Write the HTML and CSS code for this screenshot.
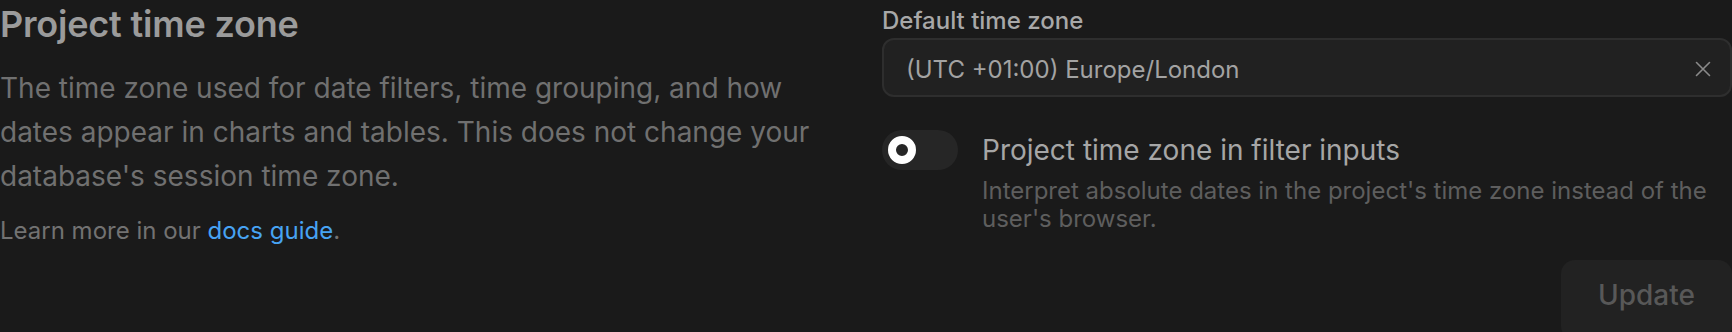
FILE: index.html
```html
<!DOCTYPE html>
<html lang="en">
<head>
<meta charset="utf-8">
<title>Project time zone</title>
<link rel="stylesheet" href="styles.css">
</head>
<body>
<div class="settings">
  <section class="intro">
    <h2 class="title">Project time zone</h2>
    <p class="desc">The time zone used for date filters, time grouping, and how dates appear in charts and tables. This does not change your database's session time zone.</p>
    <p class="learn">Learn more in our <a class="link" href="#">docs guide</a>.</p>
  </section>
  <section class="form">
    <label class="label">Default time zone</label>
    <div class="select">
      <span class="select-value">(UTC +01:00) Europe/London</span>
      <svg class="clear" width="16" height="16" viewBox="0 0 16 16" fill="none" stroke="currentColor" stroke-width="1.6" stroke-linecap="round"><path d="M1.5 1.5L14.5 14.5M14.5 1.5L1.5 14.5"/></svg>
    </div>
    <div class="option">
      <div class="toggle"><span class="knob"></span></div>
      <div class="option-text">
        <div class="option-title">Project time zone in filter inputs</div>
        <div class="option-desc">Interpret absolute dates in the project's time zone instead of the user's browser.</div>
      </div>
    </div>
    <div class="actions">
      <button class="btn">Update</button>
    </div>
  </section>
</div>
</body>
</html>
```

FILE: styles.css
```css
html, body {
  margin: 0;
  padding: 0;
  background: #1a1a1a;
  height: 100%;
  overflow: hidden;
}
body {
  font-family: Inter, "Noto Sans", sans-serif;
}
.settings {
  display: grid;
  grid-template-columns: 850px 1fr;
  column-gap: 32px;
  width: 1732px;
}
.intro {
  padding-top: 2px;
}
.title {
  margin: 0;
  font-size: 36px;
  font-weight: 600;
  line-height: 44px;
  color: #9b9b9b;
  letter-spacing: -0.2px;
}
.desc {
  margin: 20px 0 0;
  font-size: 28px;
  line-height: 44px;
  color: #707070;
  max-width: 830px;
}
.learn {
  margin: 17px 0 0;
  font-size: 24px;
  line-height: 32px;
  color: #727272;
}
.link {
  color: #47a3f3;
  text-decoration: none;
}
.form {
  display: flex;
  flex-direction: column;
}
.label {
  font-size: 24px;
  font-weight: 500;
  line-height: 32px;
  color: #a8a8a8;
  padding-top: 5px;
}
.select {
  margin-top: 1px;
  height: 59px;
  box-sizing: border-box;
  border: 2px solid #2e2e2e;
  border-radius: 12px;
  background: #212121;
  display: flex;
  align-items: center;
  padding: 5px 19px 0 22px;
}
.select-value {
  flex: 1;
  font-size: 24px;
  line-height: 30px;
  color: #a3a3a3;
}
.clear {
  color: #8a8a8a;
  margin-top: -3px;
}
.option {
  display: flex;
  gap: 24px;
  margin-top: 33px;
}
.toggle {
  width: 76px;
  height: 40px;
  border-radius: 20px;
  background: #262626;
  flex: none;
  display: flex;
  align-items: center;
  padding-left: 6px;
  box-sizing: border-box;
}
.knob {
  width: 28px;
  height: 28px;
  box-sizing: border-box;
  border-radius: 50%;
  border: 8px solid #ffffff;
  background: #262626;
}
.option-title {
  font-size: 28px;
  line-height: 40px;
  color: #a6a6a6;
}
.option-desc {
  margin-top: 7px;
  font-size: 24px;
  line-height: 28px;
  color: #5e5e5e;
}
.actions {
  display: flex;
  justify-content: flex-end;
  margin-top: 27px;
}
.btn {
  font-family: Inter, "Noto Sans", sans-serif;
  font-size: 28px;
  font-weight: 500;
  color: #585858;
  background: #222222;
  border: none;
  border-radius: 14px;
  padding: 0 0 10px;
  height: 80px;
  width: 171px;
}
```
